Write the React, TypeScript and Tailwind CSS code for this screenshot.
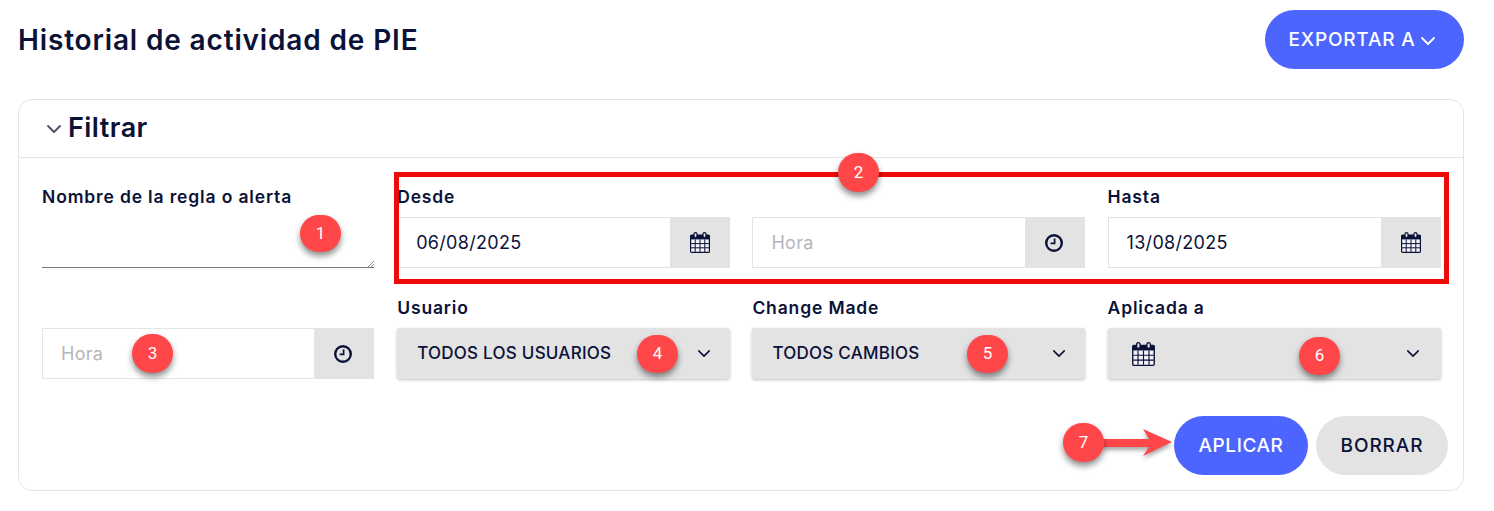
const ink = "#0b1238";

function Chevron({ className }: { className: string }) {
  return (
    <svg viewBox="0 0 16 10" fill="none" stroke="currentColor" strokeWidth="1.8" strokeLinecap="round" strokeLinejoin="round" className={className}>
      <path d="M2 2l6 6 6-6" />
    </svg>
  );
}

function CalendarIcon({ className }: { className: string }) {
  return (
    <svg viewBox="0 0 20 21" className={className}>
      <rect x="0.6" y="3" width="18.8" height="17.4" rx="1" fill="#f2f3f7" stroke={ink} strokeWidth="1.2" />
      <rect x="0.6" y="3" width="18.8" height="4.4" fill={ink} />
      <rect x="4" y="0.6" width="3" height="5" rx="1.5" fill="#e3e3e3" stroke={ink} strokeWidth="1.2" />
      <rect x="13" y="0.6" width="3" height="5" rx="1.5" fill="#e3e3e3" stroke={ink} strokeWidth="1.2" />
      <path d="M5.2 7.4v12.6M10 7.4v12.6M14.8 7.4v12.6M1 11.6h18M1 15.8h18" stroke={ink} strokeWidth="1" fill="none" />
    </svg>
  );
}

function ClockIcon() {
  return (
    <svg viewBox="0 0 18 18" fill="none" stroke={ink} className="mr-[2px] h-[18px] w-[18px]">
      <circle cx="9" cy="9" r="7.8" strokeWidth="2.4" />
      <path d="M9.6 4.6v4.8H5.6" strokeWidth="1.7" />
    </svg>
  );
}

function Label({ children }: { children?: string }) {
  return <div className="flex h-[20px] items-center text-[17.5px] font-semibold tracking-[0.85px]">{children}</div>;
}

function AddonInput({ value, placeholder, icon }: { value?: string; placeholder?: string; icon: "calendar" | "clock" }) {
  return (
    <div className="flex h-[51px] border border-[#e4e4e4]">
      <div className={`flex flex-1 items-center pl-[18px] text-[18px] tracking-[0.3px] ${value ? "" : "text-[#b4b6bd]"}`}>{value ?? placeholder}</div>
      <div className="-my-px -mr-px flex w-[60px] items-center justify-center bg-[#e3e3e3]">
        {icon === "calendar" ? <CalendarIcon className="h-[21px] w-[20px]" /> : <ClockIcon />}
      </div>
    </div>
  );
}

function SelectBox({ children, pad = "pr-[19px]" }: { children?: React.ReactNode; pad?: string }) {
  return (
    <div className={`flex h-[51px] items-center justify-between rounded-[3px] bg-[#e3e3e3] pl-[20px] text-[17px] font-medium tracking-[0.25px] shadow-[0_1px_3px_rgba(0,0,0,0.25)] ${pad}`}>
      {children}
      <Chevron className="h-[9px] w-[14px]" />
    </div>
  );
}

function Badge({ n, className }: { n: number; className: string }) {
  return (
    <div className={`absolute flex w-[41px] items-center justify-center rounded-full bg-[#ff4649] font-['Roboto',sans-serif] text-[17px] font-normal text-white shadow-[0_4px_6px_rgba(0,0,0,0.45)] ${className}`}>
      {n}
    </div>
  );
}

export default function App() {
  return (
    <div className="relative h-[511px] overflow-hidden bg-white pl-[18px] pr-[30px] pt-[10px] font-['Inter',sans-serif] text-[#0b1238]">
      <header className="flex h-[59px] items-center justify-between">
        <h1 className="text-[28px] font-semibold tracking-[0.85px]">Historial de actividad de PIE</h1>
        <button className="flex h-[59px] w-[199px] items-center justify-center gap-[5px] rounded-full bg-[#4d65ff] pr-[4px] pt-[2px] text-[19px] font-medium tracking-[0.8px] text-white">
          EXPORTAR A
          <Chevron className="h-[10px] w-[16px]" />
        </button>
      </header>

      <section className="mt-[30px] h-[392px] rounded-[14px] border border-[#e4e4e4]">
        <div className="flex h-[58px] items-center gap-[6px] border-b border-[#e4e4e4] pl-[27px]">
          <Chevron className="mt-[1px] h-[10px] w-[16px] text-[#4a4f63]" />
          <span className="text-[27px] font-semibold tracking-[0.45px]">Filtrar</span>
        </div>

        <div className="pl-[23px] pr-[22px] pt-[29px]">
          <div className="grid grid-cols-[332.45px_332.45px_332.45px_333px] gap-x-[22.75px]">
            <div>
              <Label>Nombre de la regla o alerta</Label>
              <div className="relative mt-[10px] h-[51px] border-b border-[#7a7a7a]">
                <svg viewBox="0 0 6 6" className="absolute bottom-0 right-0 h-[6px] w-[6px]" stroke="#8a8a8a" fill="none">
                  <path d="M0 6L6 0M3 6L6 3" />
                </svg>
              </div>
            </div>
            <div>
              <Label>Desde</Label>
              <div className="mt-[10px]"><AddonInput value="06/08/2025" icon="calendar" /></div>
            </div>
            <div>
              <Label />
              <div className="mt-[10px]"><AddonInput placeholder="Hora" icon="clock" /></div>
            </div>
            <div>
              <Label>Hasta</Label>
              <div className="mt-[10px]"><AddonInput value="13/08/2025" icon="calendar" /></div>
            </div>
          </div>

          <div className="mt-[30px] grid grid-cols-[332.45px_332.45px_332.45px_333px] gap-x-[22.75px]">
            <div>
              <Label />
              <div className="mt-[10px]"><AddonInput placeholder="Hora" icon="clock" /></div>
            </div>
            <div>
              <Label>Usuario</Label>
              <div className="mt-[10px]"><SelectBox><span className="pt-[1px]">TODOS LOS USUARIOS</span></SelectBox></div>
            </div>
            <div>
              <Label>Change Made</Label>
              <div className="mt-[10px]"><SelectBox><span className="pt-[1px]">TODOS CAMBIOS</span></SelectBox></div>
            </div>
            <div>
              <Label>Aplicada a</Label>
              <div className="mt-[10px]"><SelectBox pad="pr-[21px]"><CalendarIcon className="ml-[4px] h-[24px] w-[23px]" /></SelectBox></div>
            </div>
          </div>

          <div className="mr-[-7px] mt-[37px] flex justify-end gap-[8px]">
            <button className="h-[59px] w-[134px] rounded-full bg-[#4d65ff] pt-[2px] text-[19px] font-medium tracking-[0.6px] text-white">APLICAR</button>
            <button className="h-[59px] w-[132px] rounded-full bg-[#e3e3e3] pt-[2px] text-[19px] font-medium tracking-[0.9px]">BORRAR</button>
          </div>
        </div>
      </section>

      <div className="absolute left-[394px] top-[172px] h-[112px] w-[1055px] border-[5px] border-[#ee0a0a]" />

      <svg viewBox="0 0 72 32" className="absolute left-[1102px] top-[427px] h-[32px] w-[72px]" style={{ filter: "drop-shadow(0 3px 2px rgba(0,0,0,0.35))" }}>
        <path d="M0 12h47l-6-10 29 13-29 14 6-9H0z" fill="#ff4649" />
      </svg>

      <Badge n={1} className="left-[300px] top-[215px] h-[37px]" />
      <Badge n={2} className="left-[838px] top-[153px] h-[39px]" />
      <Badge n={3} className="left-[132px] top-[334px] h-[39px]" />
      <Badge n={4} className="left-[637px] top-[335px] h-[38px]" />
      <Badge n={5} className="left-[967px] top-[335px] h-[38px]" />
      <Badge n={6} className="left-[1299px] top-[337px] h-[38px]" />
      <Badge n={7} className="left-[1063px] top-[423px] h-[39px]" />
    </div>
  );
}
